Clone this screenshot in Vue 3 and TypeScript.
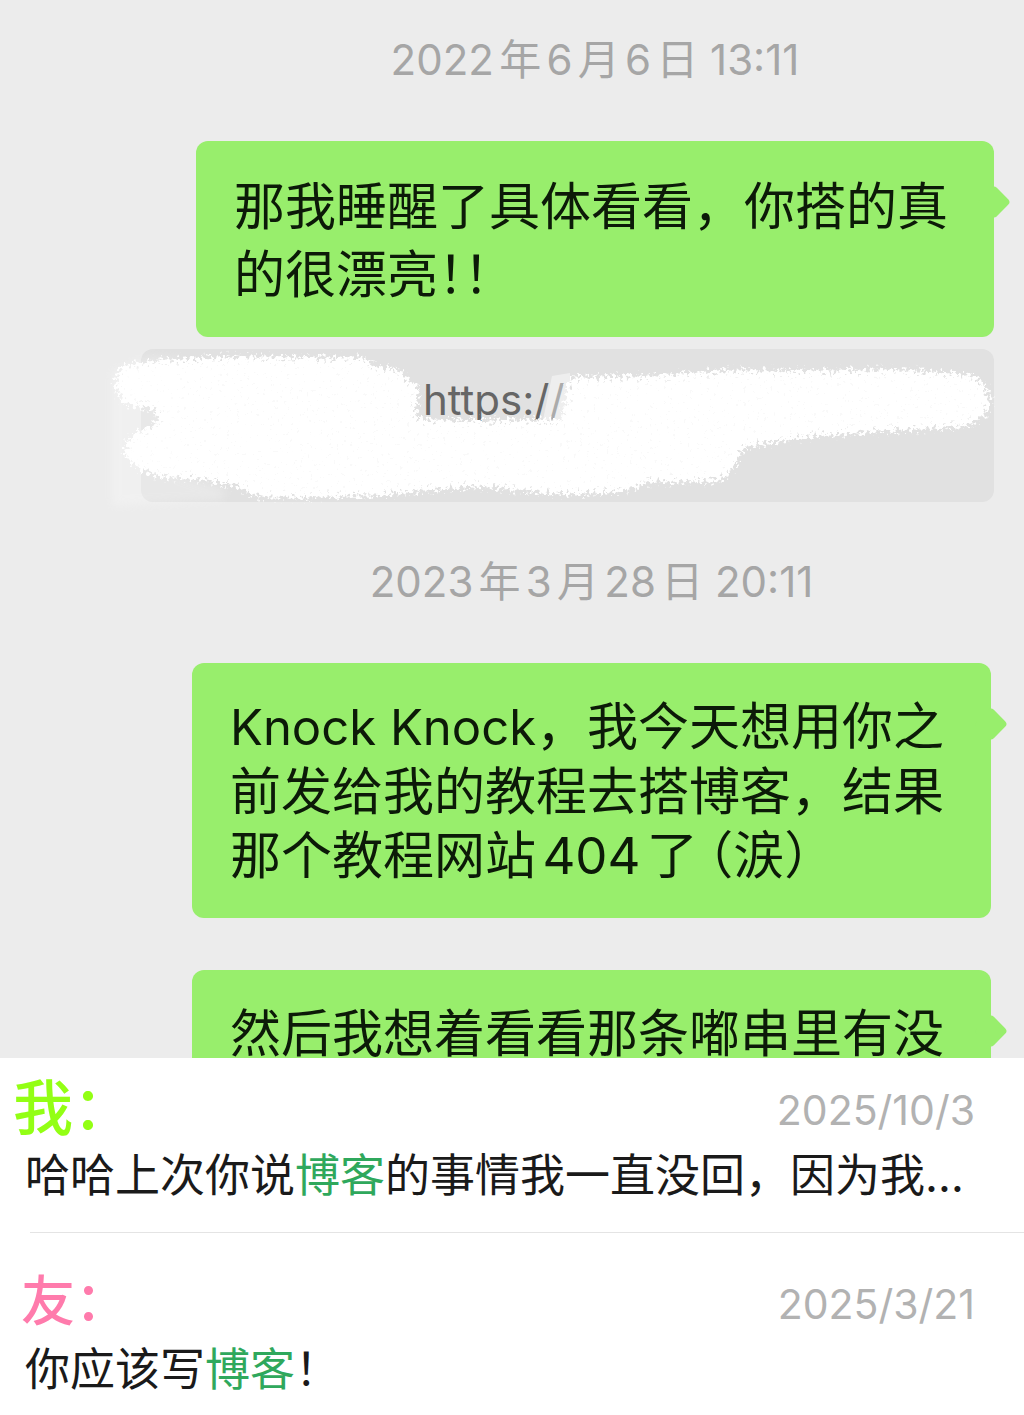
<script setup lang="ts">
interface Hit {
  id: string
  name: string
  date: string
  before: string
  keyword: string
  after: string
}

const hits: Hit[] = [
  { id: 'me', name: '我：', date: '2025/10/3', before: '哈哈上次你说', keyword: '博客', after: '的事情我一直没回，因为我…' },
  { id: 'friend', name: '友：', date: '2025/3/21', before: '你应该写', keyword: '博客', after: '！' },
]
</script>

<template>
  <main class="page">
    <section class="chat">
      <div class="group first">
        <time class="stamp" datetime="2022-06-06T13:11">2022年6月6日 13:11</time>
        <p class="bubble airy">
          <span class="line">那我睡醒了具体看看，你搭的真</span>
          <span class="line half">的很漂亮！！</span>
        </p>
        <div class="quote">
          <span class="link">https://</span>
          <svg class="scribble" viewBox="100 340 900 180" aria-hidden="true">
            <defs>
              <filter id="chalk" x="100" y="340" width="900" height="180" filterUnits="userSpaceOnUse" color-interpolation-filters="sRGB">
                <feTurbulence type="fractalNoise" baseFrequency="0.3" numOctaves="3" seed="4" />
                <feColorMatrix values="0 0 0 0 1  0 0 0 0 1  0 0 0 0 1  2.2 0 0 0 -0.6" result="noise" />
                <feGaussianBlur in="SourceGraphic" stdDeviation="4" result="soft" />
                <feComposite in="soft" in2="noise" operator="arithmetic" k1="0" k2="1.3" k3="1" k4="-1.1" />
                <feComponentTransfer result="mask"><feFuncA type="linear" slope="4" intercept="0" /></feComponentTransfer>
                <feFlood flood-color="#fff" />
                <feComposite in2="mask" operator="in" />
              </filter>
              <filter id="haze" x="100" y="340" width="200" height="180" filterUnits="userSpaceOnUse">
                <feGaussianBlur stdDeviation="4" />
              </filter>
            </defs>
            <path filter="url(#haze)" d="M112 372L150 356L180 360L180 475L225 490L222 500L112 506Z" fill="#fff" opacity=".25" />
            <path d="M552 376L570 373L570 420L543 420Z" fill="#fff" opacity=".45" />
            <path
              filter="url(#chalk)"
              fill="#fff"
              d="M120 366L160 359L230 356L300 357L364 357L374 367L400 368L408 380L420 386L416 419L470 420L530 419L562 419L569 377L600 376L660 375L720 370L800 370L890 369L930 371L970 374L984 382L992 400L985 417L968 427L900 431L820 436L742 448L740 458L733 470L720 482L640 483L645 486L620 492L580 495L545 494L480 487L440 490L380 496L300 499L255 497L240 488L215 482L160 477L145 473L130 463L122 450L132 434L158 422L156 410L122 404L114 385Z"
            />
          </svg>
        </div>
      </div>

      <div class="group second">
        <time class="stamp" datetime="2023-03-28T20:11">2023年3月28日 20:11</time>
        <p class="bubble">
          <span class="line"><span class="latin">Knock Knock</span><span>，我今天想用你之</span></span>
          <span class="line">前发给我的教程去搭博客，结果</span>
          <span class="line half"><span>那个教程网站404了</span><span class="aside">（涙）</span></span>
        </p>
        <p class="bubble">
          <span class="line">然后我想着看看那条嘟串里有没</span>
        </p>
      </div>
    </section>

    <section class="results">
      <article v-for="hit in hits" :key="hit.id" class="hit" :class="hit.id">
        <header class="head">
          <h2 class="name">{{ hit.name }}</h2>
          <time class="date">{{ hit.date }}</time>
        </header>
        <p class="text">{{ hit.before }}<mark class="keyword">{{ hit.keyword }}</mark>{{ hit.after }}</p>
      </article>
    </section>
  </main>
</template>

<style>
body {
  margin: 0;
  background: #fff;
}
</style>

<style scoped>
.page {
  font-family: Inter, "Noto Sans CJK SC", sans-serif;
  color: #0c1a08;
  overflow: hidden;
}

.chat {
  display: flex;
  flex-direction: column;
  background: #ececec;
}

.group {
  display: flex;
  flex-direction: column;
}

.first {
  padding: 28px 30px 0 196px;
}

.second {
  padding: 48px 33px 0 192px;
}

.stamp {
  margin-bottom: 49px;
  font-size: 42px;
  line-height: 64px;
  text-align: center;
  color: #a6a6a6;
  text-autospace: normal;
}

.bubble {
  position: relative;
  margin: 0;
  padding: 32px 24px 30px 38px;
  border-radius: 12px;
  background: #98ee6c;
  font-size: 51px;
  line-height: 64px;
  text-autospace: normal;
}

.bubble + .bubble {
  margin-top: 52px;
}

.line {
  display: block;
}

.airy {
  line-height: 68px;
  padding-bottom: 28px;
}

.bubble::after {
  content: "";
  position: absolute;
  top: 49px;
  right: -12px;
  width: 24px;
  height: 24px;
  border-radius: 4px;
  background: #98ee6c;
  transform: rotate(45deg);
}

.latin {
  font-size: 49px;
}

.half {
  font-feature-settings: "halt";
}

.aside {
  margin-left: 10px;
}

.quote {
  position: relative;
  margin: 12px 0 0 -55px;
  padding: 19px 24px 70px 282px;
  border-radius: 12px;
  background: #e1e1e1;
  font-size: 42px;
  line-height: 64px;
  color: #666;
}

.scribble {
  position: absolute;
  top: -9px;
  left: -41px;
  width: 900px;
  height: 180px;
}

.results {
  position: relative;
  margin-top: -38px;
  background: #fff;
}

.hit {
  padding: 14px 49px 24px 25px;
}

.hit + .hit {
  position: relative;
  padding-top: 34px;
}

.hit + .hit::before {
  content: "";
  position: absolute;
  top: 0;
  left: 30px;
  right: 0;
  height: 1px;
  background: #e4e4e4;
}

.head {
  display: flex;
  align-items: center;
  justify-content: space-between;
  height: 72px;
}

.name {
  margin: 0;
  font-size: 60px;
  line-height: 72px;
  font-weight: 500;
}

.me .name {
  margin-left: -12px;
  color: #93ff14;
}

.friend .name {
  margin-left: -4px;
  font-size: 54px;
  color: #ff7bac;
}

.date {
  padding-top: 4px;
  font-size: 41px;
  line-height: 64px;
  color: #b2b2b2;
}

.text {
  margin: 0;
  font-size: 45px;
  line-height: 64px;
  color: #1a1a1a;
  white-space: nowrap;
}

.keyword {
  background: none;
  color: #2fa85c;
}
</style>
